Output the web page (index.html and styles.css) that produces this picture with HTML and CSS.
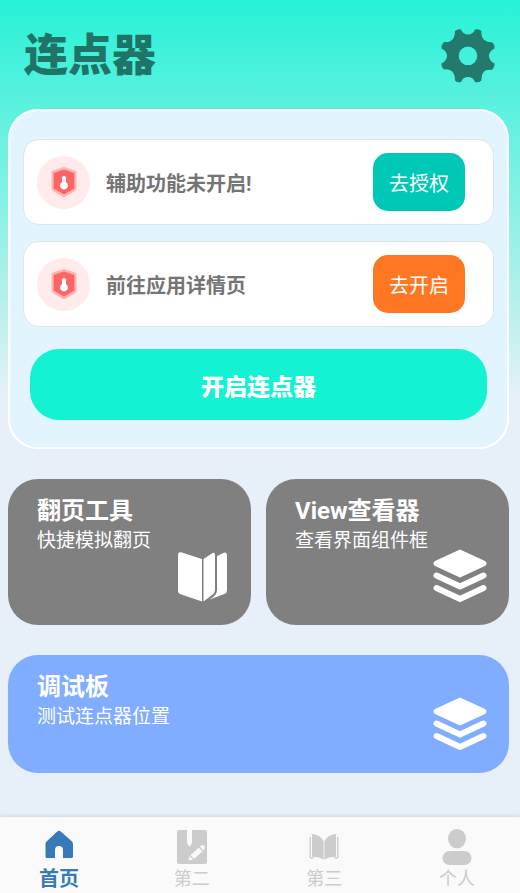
FILE: index.html
```html
<!DOCTYPE html>
<html lang="zh-CN">
<head>
<meta charset="utf-8">
<meta name="viewport" content="width=device-width, initial-scale=1">
<title>连点器</title>
<link rel="stylesheet" href="styles.css">
</head>
<body>
<svg class="defs" aria-hidden="true">
  <symbol id="shield" viewBox="0 0 26 32">
    <path fill="#ffb3b3" d="M13 1 24 4.500Q25.500 5 25.500 6.500V22Q25.500 24 24 25L13 31.500 2 25Q.5 24 .5 22V6.500Q.5 5 2 4.500Z"/>
    <path fill="#ff6464" d="M13 3.500 23.300 7V22.500L13 28.500 2.700 22.500V7Z"/>
    <path fill="#fff" d="M11 11.500q0-1.500 2-1.500t2 1.500V16a4 4 0 1 1-4 0Z"/>
  </symbol>
  <symbol id="layers" viewBox="0 0 54 54">
    <path fill="#fff" d="M27 .5 52 12Q55 14.500 52 17L27 28.500 2 17Q-1 14.500 2 12Z"/>
    <path fill="none" stroke="#fff" stroke-width="6" stroke-linecap="round" stroke-linejoin="miter" d="M3.500 26.500 27 37.500 50.500 26.500M3.500 39 27 50 50.500 39"/>
  </symbol>
</svg>
<header class="header">
  <h1 class="title">连点器</h1>
  <button class="settings" type="button" aria-label="设置">
    <svg viewBox="0 0 54 54"><path fill="#237a6c" fill-rule="evenodd" d="M14 2Q17-.5 20 .5Q22 5.500 27 5.500T34 .5Q38-.5 40.500 2Q39 13 51.500 13.500Q54 16 53.500 19.500Q48 22 48 27T53.500 34.500Q54 38 51 41Q40 39 40.500 51.500Q38 54 34 53Q32 48 27 48T20 53Q16 54 14 51.500Q14 39 3 40.500Q0 38 .5 34.500Q6 32 6 27T.5 19.500Q0 16 3 13Q14 14 14 2ZM27 17.500a9.300 9.300 0 1 0 0 18.600 9.300 9.300 0 0 0 0-18.600Z"/></svg>
  </button>
</header>
<main class="content">
  <section class="panel">
    <div class="row">
      <span class="badge"><svg><use href="#shield"/></svg></span>
      <span class="row-text">辅助功能未开启!</span>
      <button class="action" type="button">去授权</button>
    </div>
    <div class="row">
      <span class="badge"><svg><use href="#shield"/></svg></span>
      <span class="row-text">前往应用详情页</span>
      <button class="action orange" type="button">去开启</button>
    </div>
    <button class="start" type="button">开启连点器</button>
  </section>
  <section class="cards">
    <a class="card" href="#pages">
      <h2>翻页工具</h2>
      <p>快捷模拟翻页</p>
      <svg class="book" viewBox="0 0 50 50"><path fill="#fff" d="M3 .3 24 7V49.500L2 42Q0 41 0 39V2.500Q0 0 3 .3ZM25.500 7 34.500 1Q37 0 37 3V37Q37 41 34 43L25.500 49.500ZM39 4 46.500.5Q49 0 49 3V38.500Q49 41 46.500 42L31.500 47.500Q39 43.500 39 38Z"/></svg>
    </a>
    <a class="card" href="#view">
      <h2>View查看器</h2>
      <p>查看界面组件框</p>
      <svg class="layers"><use href="#layers"/></svg>
    </a>
    <a class="card wide" href="#board">
      <h2>调试板</h2>
      <p>测试连点器位置</p>
      <svg class="layers"><use href="#layers"/></svg>
    </a>
  </section>
</main>
<nav class="nav">
  <a class="tab active" href="#home">
    <svg viewBox="0 0 36 36"><path fill="currentColor" d="M18 1.800Q19 1.800 20 2.800L31 12.500Q32 13.500 32 15V27.500Q32 29 30.500 29H22V21a4 4 0 0 0-8 0v8H6Q4.500 29 4.500 27.500V15Q4.500 13.500 5.500 12.500L16 2.800Q17 1.800 18 1.800Z"/></svg>
    <span>首页</span>
  </a>
  <a class="tab" href="#second">
    <svg viewBox="0 0 36 36"><path fill="currentColor" d="M5 1H31Q33 1 33 3V33Q33 35 31 35H5Q3 35 3 33V3Q3 1 5 1Z"/><path fill="#fafafa" d="M13 1h5v13l-2.500 4-2.500-4ZM16.500 26 25 18.500 28.500 22.500 20 30ZM15.500 27 19 30.700 14.500 31.500ZM26 17.500 28 16Q29.500 15.500 30.500 17 31.500 18.500 29.500 21.500Z"/></svg>
    <span>第二</span>
  </a>
  <a class="tab" href="#third">
    <svg viewBox="0 0 36 36"><path fill="currentColor" d="M6 5.500Q6 4.800 7 5Q14 6 17.600 12V31Q14 27.500 7 28Q6 28 6 27ZM30 5.500Q30 4.800 29 5Q22 6 18.400 12V31Q22 27.500 29 28Q30 28 30 27Z"/><path fill="none" stroke="currentColor" stroke-width="1.400" d="M7.500 29H5.500Q4.200 29 4.200 28V8M28.500 29h2Q31.800 29 31.800 28V8"/></svg>
    <span>第三</span>
  </a>
  <a class="tab" href="#me">
    <svg viewBox="0 0 36 36"><g fill="currentColor"><ellipse cx="18" cy="9.700" rx="9" ry="9.700"/><rect x="3.500" y="22" width="29" height="14" rx="7"/></g></svg>
    <span>个人</span>
  </a>
</nav>
</body>
</html>
```
FILE: styles.css
```css
* { box-sizing: border-box; }

body {
  margin: 0;
  min-height: 100vh;
  display: flex;
  flex-direction: column;
  font-family: Roboto, "Noto Sans CJK SC", sans-serif;
  background: #e7f0f8 linear-gradient(#26f2d6 0, #5df1df 110px, #c8f0ee 340px, #e7f0f8 400px) no-repeat;
}

button { border: 0; padding: 0; font-family: inherit; cursor: pointer; }
h1, h2, p { margin: 0; }
a { color: inherit; text-decoration: none; }
svg { display: block; }
.defs { position: absolute; width: 0; height: 0; }

.header {
  display: flex;
  justify-content: space-between;
  align-items: center;
  height: 109px;
  padding: 2px 25px 0 24px;
}

.title { font-size: 44px; line-height: 64px; font-weight: 900; color: #1f7467; }
.settings { width: 54px; height: 54px; background: none; }
.settings svg { width: 100%; height: 100%; }

.content { padding: 0 11px 30px 8px; }

.panel {
  display: flex;
  flex-direction: column;
  gap: 16px;
  padding: 28px 13px 27px;
  border: 2px solid #fff;
  border-radius: 30px;
  background: #e2f4fd;
}

.row {
  display: flex;
  align-items: center;
  gap: 16px;
  height: 86px;
  padding: 0 28px 0 13px;
  border: 1px solid #e0e5e8;
  border-radius: 16px;
  background: #fff;
}

.badge {
  display: grid;
  place-items: center;
  width: 53px;
  height: 53px;
  border-radius: 50%;
  background: #ffebeb;
}
.badge svg { width: 26px; height: 32px; }

.row-text { flex: 1; font-size: 20px; font-weight: 700; color: #747474; }

.action {
  width: 92px;
  height: 58px;
  border-radius: 15px;
  background: #00c8b7;
  color: #fff;
  font-size: 20px;
}
.action.orange { background: #ff7722; }

.start {
  height: 71px;
  margin: 6px 7px 0;
  border-radius: 29px;
  background: #13f3d4;
  color: #fff;
  font-size: 23px;
  font-weight: 900;
}

.cards {
  display: grid;
  grid-template-columns: 1fr 1fr;
  gap: 30px 15px;
  margin-top: 30px;
}

.card {
  position: relative;
  min-height: 146px;
  padding: 17px 29px;
  border-radius: 30px;
  background: #808080;
  color: #fff;
}
.card h2 { font-size: 24px; line-height: 30px; font-weight: 700; }
.card p { font-size: 19px; line-height: 30px; }
.card.wide { grid-column: 1 / -1; min-height: 118px; background: #80adff; }
.book, .layers { position: absolute; right: 22px; bottom: 22px; width: 54px; height: 54px; }
.book { right: 23px; bottom: 23px; width: 50px; height: 50px; }

.nav {
  display: flex;
  justify-content: space-between;
  height: 76px;
  margin-top: auto;
  padding: 12px 43px 0 39px;
  background: #fafafa;
  box-shadow: 0 -1px 4px #c9d5dd;
}

.tab {
  display: flex;
  flex-direction: column;
  align-items: center;
  width: 40px;
  color: #ccc;
  font-size: 18px;
  line-height: 28px;
  white-space: nowrap;
}
.tab svg { width: 36px; height: 36px; }
.tab.active { color: #367ab8; font-size: 20px; font-weight: 700; }
```
